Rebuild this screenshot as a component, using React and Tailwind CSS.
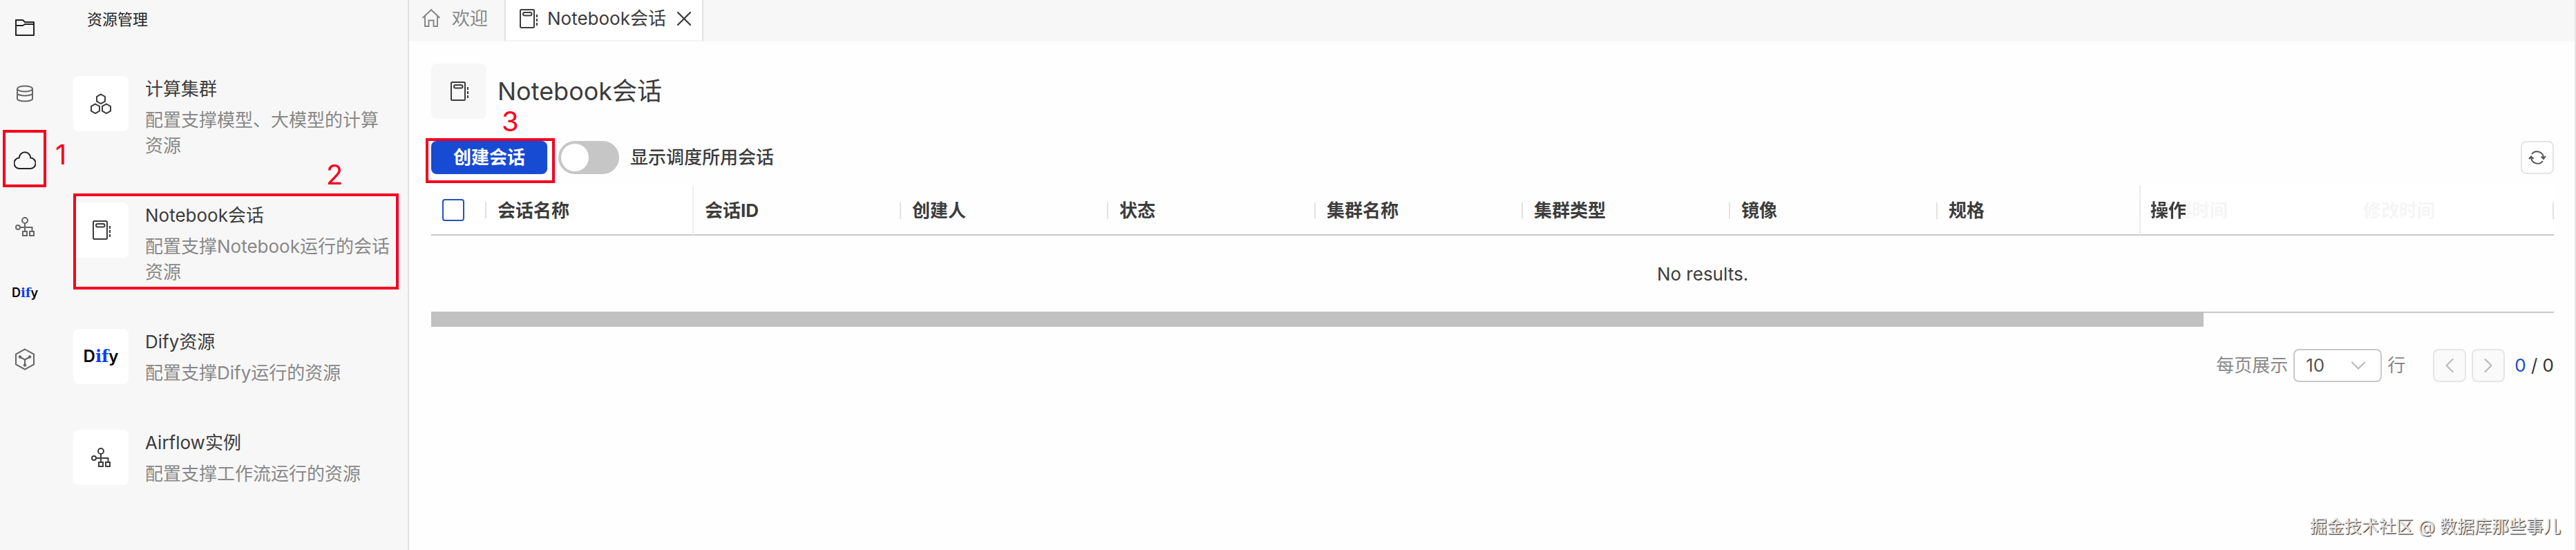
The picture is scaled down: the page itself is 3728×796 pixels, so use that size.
import { ChevronDown, ChevronLeft, ChevronRight, X } from 'lucide-react'
import clsx from 'clsx'

const columns = ['会话ID', '创建人', '状态', '集群名称', '集群类型', '镜像', '规格', '创建时间', '修改时间']

function Icon({ children, className }) {
  return (
    <svg
      viewBox="0 0 32 32"
      fill="none"
      stroke="currentColor"
      strokeWidth="2"
      className={clsx('size-8 shrink-0', className)}
      aria-hidden="true"
    >
      {children}
    </svg>
  )
}

function FolderIcon() {
  return (
    <Icon>
      <path d="M3 5h10l3 3h13v19H3zM3 13h10l3-2h13" strokeLinejoin="round" />
    </Icon>
  )
}

function DatabaseIcon() {
  return (
    <Icon className="text-[#666666]">
      <ellipse cx="16" cy="8.5" rx="11" ry="4" />
      <path d="M5 8.5V23c0 2 5 3.500 11 3.500s11-1.500 11-3.500V8.500M5 15c0 2 5 3.500 11 3.500s11-1.500 11-3.500" />
    </Icon>
  )
}

function CloudIcon() {
  return (
    <Icon>
      <path d="M8.500 28a7.600 7.600 0 0 1-.7-15.500a8.200 8.200 0 0 1 16.400 0a7.600 7.600 0 0 1-.7 15.500z" strokeLinejoin="round" />
    </Icon>
  )
}

function WorkflowIcon({ className }) {
  return (
    <Icon className={className}>
      <circle cx="16" cy="7" r="4" />
      <circle cx="6" cy="17" r="3" />
      <path d="M9 17h17.500v5.500M16 11v11.500" />
      <rect x="13" y="23" width="6" height="6" />
      <rect x="23" y="23" width="6" height="6" />
    </Icon>
  )
}

function ModelIcon() {
  return (
    <Icon className="text-[#666666]">
      <path d="M16 1.500l13 7.200v14.600l-13 7.200-13-7.200V8.700z" />
      <path d="M16 24v-7.500L9.500 13M16 16.500l6.500-3.500" />
      <g fill="currentColor" stroke="none">
        <circle cx="9" cy="12.5" r="2.2" />
        <circle cx="23" cy="12.5" r="2.2" />
        <circle cx="16" cy="24.5" r="2.2" />
      </g>
    </Icon>
  )
}

function ClusterIcon() {
  return (
    <Icon>
      <path d="M16 2.500l6 3.400v6.800l-6 3.400-6-3.400V5.900zM8 16.500l6 3.400v6.800l-6 3.400-6-3.400v-6.800zM24 16.500l6 3.400v6.800l-6 3.400-6-3.400v-6.800z" />
    </Icon>
  )
}

function NotebookIcon() {
  return (
    <Icon>
      <rect x="5" y="3" width="20" height="26" rx="1.5" />
      <rect x="9" y="7" width="12.5" height="4.5" rx="2.2" />
      <path d="M29 10v16" strokeDasharray="4 2" />
    </Icon>
  )
}

function HomeIcon() {
  return (
    <Icon>
      <path d="M3.500 15L16 3.200 28.500 15M7 12v15h5.500v-8.500h7V27H25V12" />
    </Icon>
  )
}

function RefreshIcon() {
  return (
    <Icon className="text-[#555555]">
      <path d="M8 11a9.500 9.500 0 0 1 17 6M24 21a9.500 9.500 0 0 1-17-6M21.500 14.500l3.500 3.500 3-4M4 18l3-3.500 3.500 3.500" />
    </Icon>
  )
}

function DifyLogo({ className }) {
  return (
    <span className={clsx('font-semibold leading-none text-black', className)}>
      D<span className="font-['DejaVu_Serif'] font-bold text-[#0c3cff]">if</span>y
    </span>
  )
}

// numbered red frame that points at a step of the guide
function Step({ number, frame, place }) {
  return (
    <>
      <span className={clsx('pointer-events-none absolute z-10 border-4 border-[#f5001f]', frame)} />
      <span className={clsx('pointer-events-none absolute z-10 text-[40px] font-normal leading-none text-[#f5001f]', place)}>
        {number}
      </span>
    </>
  )
}

const railItems = [
  { label: '文件', icon: <FolderIcon /> },
  { label: '数据', icon: <DatabaseIcon /> },
  { label: '资源管理', icon: <CloudIcon />, active: true },
  { label: '工作流', icon: <WorkflowIcon className="text-[#666666]" /> },
  { label: 'Dify', icon: <DifyLogo className="text-lg" /> },
  { label: '模型', icon: <ModelIcon /> },
]

const resources = [
  { title: '计算集群', text: '配置支撑模型、大模型的计算资源', icon: <ClusterIcon /> },
  { title: 'Notebook会话', text: '配置支撑Notebook运行的会话资源', icon: <NotebookIcon />, active: true },
  { title: 'Dify资源', text: '配置支撑Dify运行的资源', icon: <DifyLogo className="text-2xl" /> },
  { title: 'Airflow实例', text: '配置支撑工作流运行的资源', icon: <WorkflowIcon /> },
]

function Rail() {
  return (
    <nav className="flex w-[72px] shrink-0 flex-col items-center gap-12 pt-4 text-[#222222]">
      {railItems.map((item) => (
        <button
          key={item.label}
          type="button"
          aria-label={item.label}
          className="relative flex size-12 items-center justify-center"
        >
          {item.icon}
          {item.active && (
            <Step number="1" frame="-left-2 -top-5 h-[83px] w-[63px]" place="left-[68px] -top-1" />
          )}
        </button>
      ))}
    </nav>
  )
}

function Sidebar() {
  return (
    <aside className="w-[520px] shrink-0 border-r-2 border-[#e0e0e0] pl-[34px] pr-5">
      <h2 className="flex h-14 items-center pl-5 text-[22px] text-[#222222]">资源管理</h2>
      <ul className="mt-[54px] flex flex-col gap-16">
        {resources.map((item) => (
          <li key={item.title} className="relative">
            <a href="#" className="flex gap-6">
              <span className="flex size-20 shrink-0 items-center justify-center rounded-lg bg-white">{item.icon}</span>
              <span className="-mb-2 flex flex-col gap-2 leading-[37px]">
                <span>{item.title}</span>
                <span className="mb-2 text-[#888888]">{item.text}</span>
              </span>
            </a>
            {item.active && (
              <Step number="2" frame="left-0 -top-[13px] h-[139px] w-[471px]" place="left-[366px] -top-[60px]" />
            )}
          </li>
        ))}
      </ul>
    </aside>
  )
}

function Tabs() {
  return (
    <div className="flex h-[60px] bg-[#f7f7f7]">
      <button type="button" className="flex items-center gap-3.5 pb-1.5 pl-4 pr-6 text-[#888888]">
        <HomeIcon />
        欢迎
      </button>
      <div className="flex items-center gap-2 border-x-2 border-b-2 border-x-[#e0e0e0] border-b-[#f4f4f4] bg-white pb-1 pl-4 pr-2">
        <button type="button" className="flex items-center gap-3">
          <NotebookIcon />
          Notebook会话
        </button>
        <button type="button" aria-label="关闭">
          <X size={36} strokeWidth={1.5} />
        </button>
      </div>
    </div>
  )
}

function Toolbar() {
  return (
    <div className="mt-8 flex items-center justify-between">
      <div className="flex items-center gap-4">
        <button type="button" className="relative h-12 rounded-lg bg-[#174bd4] px-8 font-bold text-white">
          创建会话
          <Step number="3" frame="-left-2 -top-1 h-[65px] w-[187px]" place="left-[102px] -top-12" />
        </button>
        <label className="flex items-center gap-4 font-medium">
          <input
            type="checkbox"
            role="switch"
            className="h-12 w-[88px] appearance-none rounded-full bg-[#c6c6c6] p-1 before:block before:size-10 before:rounded-full before:bg-white checked:bg-[#174bd4] checked:before:ml-10"
          />
          显示调度所用会话
        </label>
      </div>
      <button
        type="button"
        aria-label="刷新"
        className="flex size-12 items-center justify-center rounded-lg border-2 border-[#e4e4e4] bg-white"
      >
        <RefreshIcon />
      </button>
    </div>
  )
}

function Divider() {
  return <span className="h-6 w-0.5 bg-[#e2e2e2]" />
}

function SessionTable() {
  return (
    <div className="mt-4">
      <div className="overflow-hidden">
        <table className="w-[3680px] table-fixed border-separate border-spacing-0 text-left">
          <thead>
            <tr>
              <th className="sticky left-0 h-[73px] w-20 border-b-2 border-[#c8c8c8] bg-white p-0 pl-4">
                <div className="flex items-center justify-between">
                  <input
                    type="checkbox"
                    aria-label="全选"
                    className="size-8 appearance-none rounded border-2 border-[#2453bd] bg-white checked:bg-[#2453bd]"
                  />
                  <Divider />
                </div>
              </th>
              <th className="sticky left-20 w-[300px] border-b-2 border-r-2 border-b-[#c8c8c8] border-r-[#efefef] bg-white p-0 pl-4 pt-0.5">
                会话名称
              </th>
              {columns.map((name) => (
                <th key={name} className="w-[300px] border-b-2 border-[#c8c8c8] p-0 pl-4 pt-0.5">
                  <div className="flex items-center justify-between">
                    {name}
                    <Divider />
                  </div>
                </th>
              ))}
              <th className="sticky right-0 border-b-2 border-l-2 border-b-[#c8c8c8] border-l-[#ebebeb] bg-white/95 p-0 pl-3.5 pt-0.5">
                <div className="flex items-center justify-between">
                  操作
                  <Divider />
                </div>
              </th>
            </tr>
          </thead>
          <tbody>
            <tr>
              <td colSpan={12} className="h-[110px] p-0 pt-0.5 text-center">
                No results.
              </td>
            </tr>
          </tbody>
        </table>
      </div>
      <div className="flex h-[22px]">
        <div className="w-[83.5%] bg-[#c1c1c1]" />
        <div className="flex-1 border-t-2 border-[#c8c8c8]" />
      </div>
    </div>
  )
}

function Pagination() {
  return (
    <div className="mt-8 flex items-center justify-end gap-2 text-[#888888]">
      <label htmlFor="page-size">每页展示</label>
      <div className="relative">
        <select
          id="page-size"
          defaultValue="10"
          className="block h-12 w-32 appearance-none rounded-lg border-2 border-[#c8c8c8] bg-white pl-4 text-[#555555]"
        >
          <option>10</option>
          <option>20</option>
          <option>50</option>
        </select>
        <ChevronDown
          className="pointer-events-none absolute right-4 top-1.5 text-[#bbbbbb]"
          size={36}
          strokeWidth={1.5}
        />
      </div>
      <span>行</span>
      <button
        type="button"
        aria-label="上一页"
        className="ml-8 flex size-12 items-center justify-center rounded-lg border-2 border-[#e6e6e6] bg-[#fafafa] text-[#bbbbbb]"
      >
        <ChevronLeft size={36} strokeWidth={1.5} />
      </button>
      <button
        type="button"
        aria-label="下一页"
        className="flex size-12 items-center justify-center rounded-lg border-2 border-[#e6e6e6] bg-[#fafafa] text-[#bbbbbb]"
      >
        <ChevronRight size={36} strokeWidth={1.5} />
      </button>
      <span className="ml-1.5 text-[#333333]">
        <span className="text-[#174bd4]">0</span> / 0
      </span>
    </div>
  )
}

function App() {
  return (
    <div className="flex min-h-screen bg-[#f7f7f7] font-[Inter,'Noto_Sans_CJK_SC',sans-serif] text-[26px] leading-9 text-[#3c3c3c]">
      <Rail />
      <Sidebar />
      <div className="flex min-w-0 flex-1 flex-col border-r-2 border-[#e6e6e6] bg-[#fefefe]">
        <Tabs />
        <main className="flex-1 pl-8 pr-[30px] pt-8">
          <div className="flex items-center gap-4">
            <span className="flex size-20 items-center justify-center rounded-lg bg-[#f7f7f7]">
              <NotebookIcon />
            </span>
            <h1 className="text-4xl">Notebook会话</h1>
          </div>
          <Toolbar />
          <SessionTable />
          <Pagination />
        </main>
        <footer className="flex justify-end pb-4 pr-5 text-[25px] text-[#e4e4e4] [text-shadow:1px_1px_1px_#222222]">
          掘金技术社区 @ 数据库那些事儿
        </footer>
      </div>
    </div>
  )
}

export default App
